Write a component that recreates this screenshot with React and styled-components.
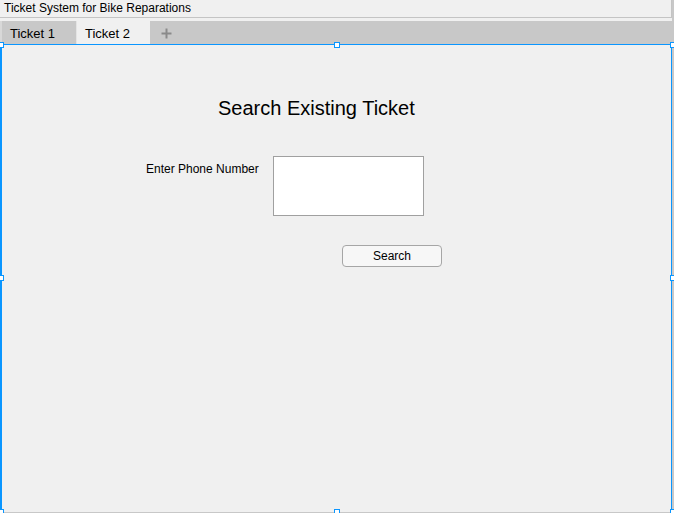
import React from 'react';
import styled, { createGlobalStyle } from 'styled-components';

const GlobalStyle = createGlobalStyle`
  html, body {
    margin: 0;
    padding: 0;
    background: #f0f0f0;
  }
  body {
    font-family: "Liberation Sans", Arial, sans-serif;
    color: #000;
    overflow: hidden;
  }
`;

const Window = styled.div`
  display: flex;
  flex-direction: column;
  width: 674px;
  height: 513px;
  background: #f0f0f0;
  box-sizing: border-box;
  border-right: 2px solid #c8c8c8;
`;

const TitleBar = styled.div`
  height: 17px;
  padding-left: 4px;
  font-size: 12px;
  line-height: 16px;
  border-bottom: 1px solid #c4c4c4;
  border-right: 1px solid #c4c4c4;
  margin-bottom: 3px;
`;

const TabStrip = styled.div`
  display: flex;
  align-items: stretch;
  height: 23px;
  background: #c8c8c8;
  border-left: 2px solid #d8d8d8;
  box-sizing: border-box;
`;

const Tab = styled.div`
  width: 74px;
  padding: 2px 0 0 8px;
  box-sizing: border-box;
  font-size: 13px;
  line-height: 21px;
  background: ${p => (p.$active ? '#f0f0f0' : '#c8c8c8')};
  border-left: ${p => (p.$active ? '1px solid #e4e4e4' : 'none')};
`;

const AddTab = styled.div`
  display: flex;
  align-items: center;
  padding: 2px 0 0 11px;
`;

const Canvas = styled.div`
  position: relative;
  flex: 1;
  border-top: 1px solid #0a96ff;
  border-left: 2px solid #0a96ff;
  border-right: 1px solid #0a96ff;
  border-bottom: 1px solid #c8c8c8;
`;

const Handle = styled.span`
  position: absolute;
  width: 4px;
  height: 4px;
  background: #fff;
  border: 1px solid #0a96ff;
  left: ${p => p.$x};
  top: ${p => p.$y};
  transform: translate(-50%, -50%);
`;

const Heading = styled.h1`
  margin: 52px 0 0 216px;
  font-size: 20px;
  font-weight: normal;
  line-height: 23px;
`;

const Form = styled.div`
  display: grid;
  grid-template-columns: 127px 151px;
  margin: 36px 0 0 144px;
`;

const Label = styled.label`
  margin-top: 6px;
  font-size: 12px;
  line-height: 14px;
`;

const PhoneInput = styled.textarea`
  width: 151px;
  height: 60px;
  box-sizing: border-box;
  margin: 0;
  border: 1px solid #a0a0a0;
  background: #fff;
  resize: none;
  outline: none;
  font-family: inherit;
`;

const SearchButton = styled.button`
  grid-column: 2;
  justify-self: start;
  margin: 29px 0 0 69px;
  width: 100px;
  height: 22px;
  box-sizing: border-box;
  border: 1px solid #a6a6a6;
  border-radius: 4px;
  background: #f7f7f7;
  font-family: inherit;
  font-size: 12px;
  color: #000;
  padding: 0;
`;

const Plus = () => (
  <svg width="11" height="11" viewBox="0 0 11 11">
    <path d="M5.5 0.5v10M0.5 5.5h10" stroke="#8a8a8a" strokeWidth="2" />
  </svg>
);

const handles = [
  ['-1px', '0px'],
  ['335px', '0px'],
  ['671px', '0px'],
  ['-1px', '233px'],
  ['671px', '233px'],
  ['-1px', '467px'],
  ['335px', '467px'],
  ['671px', '467px'],
];

const App = () => (
  <Window>
    <GlobalStyle />
    <TitleBar>Ticket System for Bike Reparations</TitleBar>
    <TabStrip>
      <Tab>Ticket 1</Tab>
      <Tab $active>Ticket 2</Tab>
      <AddTab>
        <Plus />
      </AddTab>
    </TabStrip>
    <Canvas>
      <Heading>Search Existing Ticket</Heading>
      <Form>
        <Label>Enter Phone Number</Label>
        <PhoneInput />
        <SearchButton>Search</SearchButton>
      </Form>
      {handles.map(([x, y]) => (
        <Handle key={x + y} $x={x} $y={y} />
      ))}
    </Canvas>
  </Window>
);

export default App;
